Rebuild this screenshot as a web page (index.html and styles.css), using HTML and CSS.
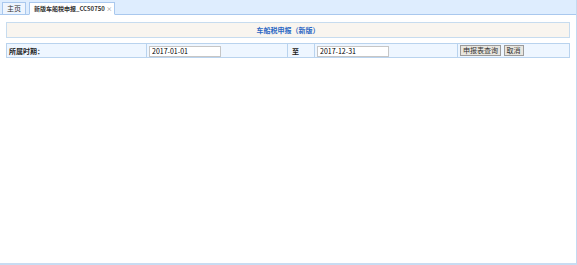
FILE: index.html
```html
<!DOCTYPE html>
<html lang="zh">
<head>
    <meta charset="UTF-8">
    <title>新版车船税申报</title>
    <link rel="stylesheet" href="styles.css">
</head>
<body>
<div class="page">
    <div class="tabs">
        <div class="tab">主页</div>
        <div class="tab active">新版车船税申报_CCS0750 <span class="close">×</span></div>
    </div>
    <div class="main">
        <div class="panel-title">车船税申报（新版）</div>
        <table class="form-row">
            <colgroup>
                <col class="c-label">
                <col class="c-input">
                <col class="c-to">
                <col class="c-input2">
                <col>
            </colgroup>
            <tr>
                <td class="label-cell">所属时期：</td>
                <td><input type="text" value="2017-01-01"></td>
                <td class="to-cell">至</td>
                <td><input type="text" value="2017-12-31"></td>
                <td class="btn-cell">
                    <button>申报表查询</button>
                    <button>取消</button>
                </td>
            </tr>
        </table>
    </div>
</div>
</body>
</html>
```

FILE: styles.css
```css
body {
    margin: 0;
    background: #ffffff;
    font-family: "Noto Sans CJK SC", "Liberation Sans", sans-serif;
    font-size: 7px;
    color: #222;
}
.page {
    width: 577px;
    height: 265px;
    box-sizing: border-box;
    border-right: 1px solid #c3d9f1;
    border-bottom: 2px solid #c8dcf2;
}
.tabs {
    height: 14px;
    background: #deedfe;
    border-bottom: 1px solid #a9c8ee;
    display: flex;
    align-items: flex-end;
    gap: 3px;
    padding-left: 2px;
}
.tab {
    height: 11px;
    line-height: 11px;
    padding: 0 4px;
    border: 1px solid #a9c8ee;
    background: #eef5fe;
    color: #333;
    margin-bottom: -1px;
}
.tab.active {
    background: #ffffff;
    border-bottom-color: #ffffff;
    font-weight: bold;
    font-size: 6px;
    padding: 0 2px 0 4px;
}
.close {
    font-weight: normal;
    color: #888;
}
.main {
    padding: 7px 6px 0 6px;
}
.panel-title {
    height: 14px;
    line-height: 14px;
    border: 1px solid #c7dcef;
    background: #f9f5ef;
    text-align: center;
    color: #2d68c4;
    font-weight: bold;
}
.form-row {
    margin-top: 5px;
    width: 100%;
    table-layout: fixed;
    border-collapse: collapse;
    background: #eef6ff;
    border: 1px solid #b9d3ee;
}
.c-label { width: 140px; }
.c-input { width: 141px; }
.c-to { width: 27px; }
.c-input2 { width: 143px; }
.form-row td {
    border: 1px solid #b9d3ee;
    height: 13px;
    padding: 0 2px;
}
.label-cell {
    font-weight: bold;
}
.to-cell {
    font-weight: bold;
    padding-left: 4px !important;
}
input {
    box-sizing: border-box;
    width: 72px;
    height: 11px;
    font-family: "Noto Sans CJK SC", "Liberation Sans", sans-serif;
    font-size: 7px;
    padding: 0 2px;
    border: 1px solid #c6c6c6;
    margin: 1px 0 0 0;
    display: block;
}
.btn-cell {
    padding-left: 2px !important;
}
button {
    font-family: "Noto Sans CJK SC", "Liberation Sans", sans-serif;
    font-size: 7px;
    height: 11px;
    line-height: 9px;
    padding: 0 2px;
    background: #e9e6df;
    border: 1px solid #9c9c9c;
    color: #333;
    margin-right: 1px;
}
```
